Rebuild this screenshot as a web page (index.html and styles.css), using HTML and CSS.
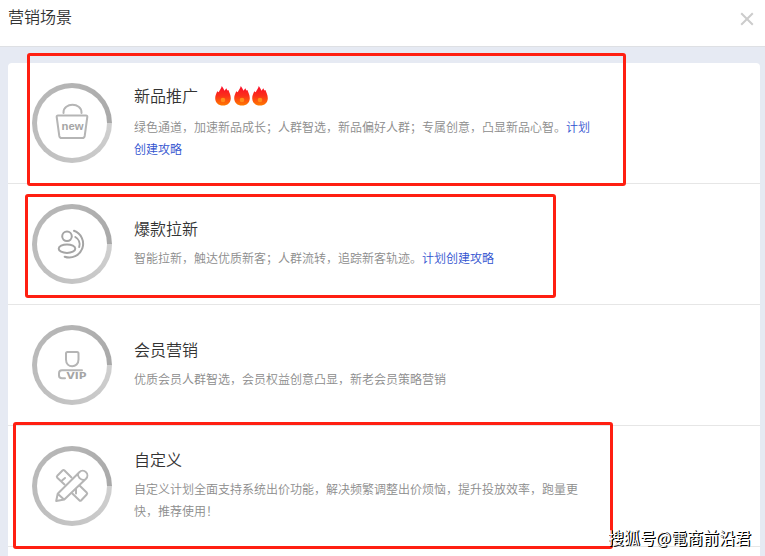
FILE: index.html
```html
<!DOCTYPE html>
<html lang="zh-CN">
<head>
    <meta charset="UTF-8">
    <meta name="viewport" content="width=device-width, initial-scale=1.0">
    <title>营销场景</title>
    <link rel="stylesheet" href="styles.css">
</head>
<body>

    <svg class="defs" width="0" height="0">
        <linearGradient id="fire" x1="0" y1="0" x2="0" y2="1">
            <stop offset="0" stop-color="#fb0b2b" />
            <stop offset="0.5" stop-color="#fb3019" />
            <stop offset="1" stop-color="#ff7a00" />
        </linearGradient>
        <symbol id="flame" viewBox="0 0 16 20">
            <path fill="url(#fire)" d="M6.800 0C7.600 1.200 8.600 2.500 9.500 4.700L11.300 2.300L12.400 4.500L13.400 4C14.200 6.500 15.800 8.500 15.800 12.200C15.800 16.700 12.600 19.500 8 19.500S0.200 16.700 0.200 12.200C0.200 9.500 1.200 7.600 2.300 5.200L3.700 6.300C4.600 4 6.300 2.500 6.800 0Z" />
            <circle cx="8" cy="14" r="2.300" fill="#ff8d1a" />
        </symbol>
    </svg>

    <div class="header">
        <h1>营销场景</h1>
        <svg class="close" width="14" height="14" viewBox="0 0 14 14">
            <path d="M1.200 1.200L12.800 12.800M12.800 1.200L1.200 12.800" />
        </svg>
    </div>

    <div class="content">
        <div class="list">
            <div class="item">
                <div class="ring">
                    <svg class="icon" viewBox="5 5 70 70">
                        <path d="M31.500 30V29.500C31.500 19.200 49.500 19.200 49.500 29.500V30" />
                        <path d="M26 32.500H54Q55.500 32.500 55.300 34L52.700 53Q52.300 55 50.500 55H29.500Q27.700 55 27.300 53L24.700 34Q24.500 32.500 26 32.500Z" />
                        <text x="29.500" y="47" font-size="11" textLength="22" lengthAdjust="spacingAndGlyphs">new</text>
                    </svg>
                </div>
                <div class="info hot">
                    <h2>新品推广
                        <span class="flames">
                            <svg><use href="#flame" /></svg>
                            <svg><use href="#flame" /></svg>
                            <svg><use href="#flame" /></svg>
                        </span>
                    </h2>
                    <p>绿色通道，加速新品成长；人群智选，新品偏好人群；专属创意，凸显新品心智。<a>计划创建攻略</a></p>
                </div>
            </div>

            <div class="item">
                <div class="ring">
                    <svg class="icon dark" viewBox="5 5 70 70">
                        <circle cx="35" cy="32.300" r="4.800" />
                        <ellipse cx="35" cy="44.700" rx="8.300" ry="4.200" />
                        <path d="M42 26.800A13.300 13.300 0 0 1 32.700 52.700" />
                        <path d="M43.300 33A8.500 8.500 0 0 1 47.200 43" />
                    </svg>
                </div>
                <div class="info">
                    <h2>爆款拉新</h2>
                    <p>智能拉新，触达优质新客；人群流转，追踪新客轨迹。<a>计划创建攻略</a></p>
                </div>
            </div>

            <div class="item">
                <div class="ring">
                    <svg class="icon" viewBox="5 5 70 70">
                        <path d="M35.500 27H45Q46.500 27 46.500 28.500V34.500C46.500 38.800 43.500 41.300 40.200 41.300S34 38.800 34 34.500V28.500Q34 27 35.500 27Z" />
                        <path d="M50 45.300H30Q27 45.300 27 48.300V50.500Q27 53.300 30 53.300H33" />
                        <text class="vip" x="34.500" y="54" font-size="9" textLength="20" lengthAdjust="spacingAndGlyphs">VIP</text>
                    </svg>
                </div>
                <div class="info">
                    <h2>会员营销</h2>
                    <p>优质会员人群智选，会员权益创意凸显，新老会员策略营销</p>
                </div>
            </div>

            <div class="item">
                <div class="ring">
                    <svg class="icon" viewBox="5 5 70 70">
                        <path d="M32.500 38.500L25.300 31.800Q24.300 30.800 25.300 29.800L30.500 24.500Q31.500 23.500 32.500 24.500L39.500 31.500" />
                        <path d="M47.500 39.500L54.700 46.500Q55.700 47.500 54.700 48.500L49.300 54.300Q48.300 55.300 47.300 54.300L40.300 47.500" />
                        <path d="M24.200 55L25.700 47.700L47.300 26.200A4.700 4.700 0 0 1 54 32.800L32.300 53.500ZM25.700 47.700L32 53.500M46 27.500C45.500 31 48.500 34.300 52.500 34" />
                        <path d="M30 34.500L33 32M44 43.500V47.500" />
                    </svg>
                </div>
                <div class="info">
                    <h2>自定义</h2>
                    <p>自定义计划全面支持系统出价功能，解决频繁调整出价烦恼，提升投放效率，跑量更快，推荐使用！</p>
                </div>
            </div>
        </div>
    </div>

    <!-- highlight frames -->
    <div class="mark mark-new"></div>
    <div class="mark mark-hot"></div>
    <div class="mark mark-custom"></div>

    <div class="watermark">搜狐号@電商前沿君</div>

</body>
</html>
```

FILE: styles.css
```css
        body {
            font-family: 'Noto Sans CJK SC', sans-serif;
            background-color: #E6EAF3;
            color: #333;
            height: 556px;
            margin: 0;
            position: relative;
            overflow: hidden;
        }

        h1,
        h2,
        p {
            margin: 0;
            font-weight: 350;
        }

        .defs {
            position: absolute;
        }

        .header {
            display: flex;
            justify-content: space-between;
            align-items: flex-start;
            box-sizing: border-box;
            height: 47px;
            padding: 4px 11px 0 8px;
            background-color: #FFFFFF;
            border-bottom: 1px solid #DEE0E4;
        }

        h1 {
            font-size: 16px;
            line-height: 24px;
        }

        .close {
            margin-top: 8px;
            fill: none;
            stroke: #CCC;
            stroke-width: 2;
        }

        .content {
            padding: 16px 5px 0 8px;
        }

        .list {
            height: 520px;
            background-color: #FFFFFF;
            border-radius: 4px;
        }

        .item {
            display: flex;
            align-items: center;
            height: 120px;
            padding: 0 24px;
            border-bottom: 1px solid #E6E6E6;
        }

        .ring {
            box-sizing: border-box;
            flex: none;
            width: 80px;
            height: 80px;
            padding: 5px;
            border-radius: 50%;
            background: conic-gradient(from 90deg, #D0D0D0, #C4C4C4 25%, #BBB 50%, #B4B4B4 75%, #A8A8A8);
        }

        .icon {
            display: block;
            width: 70px;
            height: 70px;
            border-radius: 50%;
            background-color: #FFFFFF;
            fill: none;
            stroke: #B5B5B5;
            stroke-width: 2;
            stroke-linecap: round;
            stroke-linejoin: round;
        }

        .icon.dark {
            stroke: #A5A5A5;
        }

        .icon text {
            font-family: 'Liberation Sans', sans-serif;
            font-weight: bold;
            fill: #A5A5A5;
            stroke: none;
        }

        .icon .vip {
            font-family: 'DejaVu Sans', sans-serif;
        }

        .info {
            width: 460px;
            margin-left: 22px;
            padding-bottom: 2px;
        }

        h2 {
            display: flex;
            align-items: center;
            height: 20px;
            margin-bottom: 9px;
            font-size: 16px;
            line-height: 20px;
        }

        .hot h2 {
            margin-bottom: 11px;
        }

        .flames {
            display: flex;
            gap: 2.5px;
            margin: 2px 0 0 17px;
        }

        .flames svg {
            width: 16px;
            height: 20px;
        }

        p {
            font-size: 12px;
            line-height: 22px;
            color: #8C8C8C;
        }

        p a {
            color: #3152CF;
        }

        .mark {
            position: absolute;
            box-sizing: border-box;
            border: 3px solid #FF1F11;
            border-radius: 3px;
        }

        .mark-new {
            left: 27px;
            top: 53px;
            width: 599px;
            height: 133px;
        }

        .mark-hot {
            left: 25px;
            top: 194px;
            width: 531px;
            height: 104px;
        }

        .mark-custom {
            left: 13px;
            top: 422px;
            width: 600px;
            height: 127px;
        }

        .watermark {
            position: absolute;
            right: 14px;
            bottom: 7px;
            font-size: 16px;
            line-height: 24px;
            color: #FFFFFF;
            text-shadow: 1px 1px 0 #000, 1px 0 0 #000;
        }
```
